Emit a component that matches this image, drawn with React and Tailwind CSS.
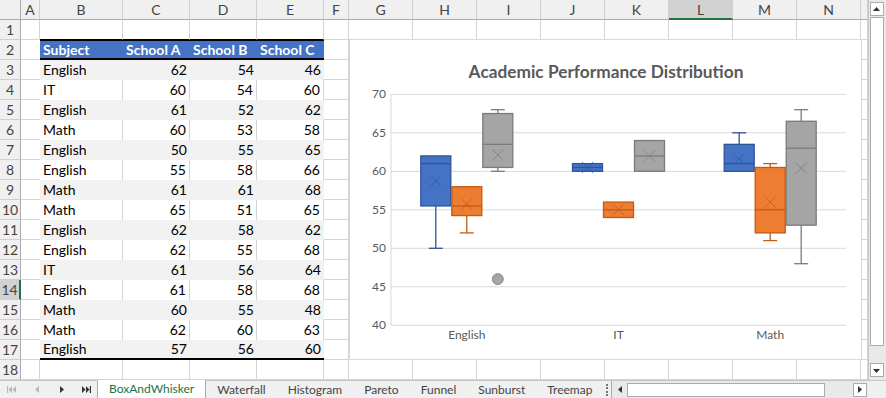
import React from 'react';

const COLS = [
  { k: 'A', w: 'w-[19px]' },
  { k: 'B', w: 'w-[83px]' },
  { k: 'C', w: 'w-[67px]' },
  { k: 'D', w: 'w-[67px]' },
  { k: 'E', w: 'w-[67px]' },
  { k: 'F', w: 'w-[25px]' },
  { k: 'G', w: 'w-[64px]' },
  { k: 'H', w: 'w-[64px]' },
  { k: 'I', w: 'w-[64px]' },
  { k: 'J', w: 'w-[64px]' },
  { k: 'K', w: 'w-[64px]' },
  { k: 'L', w: 'w-[64px]' },
  { k: 'M', w: 'w-[64px]' },
  { k: 'N', w: 'w-[64px]' },
  { k: '', w: 'w-[7px]' },
];

const DATA = [
  ['English', 62, 54, 46],
  ['IT', 60, 54, 60],
  ['English', 61, 52, 62],
  ['Math', 60, 53, 58],
  ['English', 50, 55, 65],
  ['English', 55, 58, 66],
  ['Math', 61, 61, 68],
  ['Math', 65, 51, 65],
  ['English', 62, 58, 62],
  ['English', 62, 55, 68],
  ['IT', 61, 56, 64],
  ['English', 61, 58, 68],
  ['Math', 60, 55, 48],
  ['Math', 62, 60, 63],
  ['English', 57, 56, 60],
];

const TABS = ['BoxAndWhisker', 'Waterfall', 'Histogram', 'Pareto', 'Funnel', 'Sunburst', 'Treemap'];

const SERIES = [
  { fill: '#4472C4', stroke: '#2F5597' },
  { fill: '#ED7D31', stroke: '#C55A11' },
  { fill: '#A5A5A5', stroke: '#7B7B7B' },
];

const GROUPS = [
  {
    label: 'English',
    cx: 116.8,
    boxes: [
      { min: 50, q1: 55.5, med: 61, q3: 62, max: 62, mean: 58.75 },
      { min: 52, q1: 54.25, med: 55.5, q3: 58, max: 58, mean: 55.75 },
      { min: 60, q1: 60.5, med: 63.5, q3: 67.5, max: 68, mean: 62.125, out: [46] },
    ],
  },
  {
    label: 'IT',
    cx: 268.5,
    boxes: [
      { min: 60, q1: 60, med: 60.5, q3: 61, max: 61, mean: 60.5 },
      { min: 54, q1: 54, med: 55, q3: 56, max: 56, mean: 55 },
      { min: 60, q1: 60, med: 62, q3: 64, max: 64, mean: 62 },
    ],
  },
  {
    label: 'Math',
    cx: 420.2,
    boxes: [
      { min: 60, q1: 60, med: 61, q3: 63.5, max: 65, mean: 61.6 },
      { min: 51, q1: 52, med: 55, q3: 60.5, max: 61, mean: 56 },
      { min: 48, q1: 53, med: 63, q3: 66.5, max: 68, mean: 60.4 },
    ],
  },
];

const Y = (v) => 54.3 + (70 - v) * 7.7;

function cellClass(r, c) {
  const inTable = c >= 1 && c <= 4;
  if (r === 1 && inTable) return 'border-r border-r-[#D4D4D4] border-b border-b-black';
  if (r === 2) {
    if (c === 0) return 'border-b border-[#D4D4D4]';
    if (inTable) return 'bg-[#4472C4] border-t border-b-2 border-black text-white font-bold';
  }
  if (r >= 3 && r <= 17) {
    if (c === 0) return 'border-b border-[#D4D4D4]';
    if (inTable) {
      if (r === 17) return 'bg-[#F2F2F2] border-b-2 border-black';
      if (r % 2 === 1) return 'bg-[#F2F2F2]';
      return 'bg-white border-r border-[#D4D4D4]';
    }
  }
  return 'border-r border-b border-[#D4D4D4]';
}

function cellText(r, c) {
  if (r === 2 && c >= 1 && c <= 4) return ['Subject', 'School A', 'School B', 'School C'][c - 1];
  if (r >= 3 && r <= 17 && c >= 1 && c <= 4) return DATA[r - 3][c - 1];
  return null;
}

function GridRow({ r }) {
  const active = r === 14;
  return (
    <div className="flex h-[20px]">
      <div
        className={`flex w-[21px] shrink-0 items-center justify-center border-b border-b-[#D0D0D0] text-[14px] text-[#444] ${
          active ? 'bg-[#D2D2D2] border-r-2 border-r-[#217346]' : 'bg-[#F0F0F0] border-r border-r-[#ABABAB]'
        }`}
      >
        {r}
      </div>
      {COLS.map((col, c) => {
        const t = cellText(r, c);
        return (
          <div
            key={c}
            className={`${col.w} shrink-0 flex items-center px-[3px] text-[14px] leading-none ${
              c === 1 || r === 2 ? 'justify-start' : 'justify-end'
            } ${cellClass(r, c)}`}
          >
            {t}
          </div>
        );
      })}
    </div>
  );
}

function BoxChart() {
  return (
    <svg width="511" height="319" className="block">
      <text x="256" y="38" textAnchor="middle" fontSize="17.3" fontWeight="700" fill="#595959" fontFamily="Lato, sans-serif">
        Academic Performance Distribution
      </text>
      {[70, 65, 60, 55, 50, 45, 40].map((v) => (
        <g key={v}>
          <line x1="41" x2="496" y1={Y(v)} y2={Y(v)} stroke="#D9D9D9" strokeWidth="1" />
          <text x="36" y={Y(v) + 4} textAnchor="end" fontSize="12" fill="#595959" fontFamily="Lato, sans-serif">
            {v}
          </text>
        </g>
      ))}
      <line x1="41" x2="41" y1={Y(70)} y2={Y(40)} stroke="#D9D9D9" strokeWidth="1" />
      {GROUPS.map((g) => (
        <g key={g.label}>
          <text x={g.cx} y="299" textAnchor="middle" fontSize="12" fill="#595959" fontFamily="Lato, sans-serif">
            {g.label}
          </text>
          {g.boxes.map((b, i) => {
            const s = SERIES[i];
            const left = g.cx - 46.5 + i * 31;
            const mid = left + 15.5;
            return (
              <g key={i}>
                {b.max > b.q3 && (
                  <>
                    <line x1={mid} x2={mid} y1={Y(b.max)} y2={Y(b.q3)} stroke={s.stroke} strokeWidth="1.3" />
                    <line x1={mid - 7} x2={mid + 7} y1={Y(b.max)} y2={Y(b.max)} stroke={s.stroke} strokeWidth="1.3" />
                  </>
                )}
                {b.min < b.q1 && (
                  <>
                    <line x1={mid} x2={mid} y1={Y(b.q1)} y2={Y(b.min)} stroke={s.stroke} strokeWidth="1.3" />
                    <line x1={mid - 7} x2={mid + 7} y1={Y(b.min)} y2={Y(b.min)} stroke={s.stroke} strokeWidth="1.3" />
                  </>
                )}
                <rect
                  x={left + 0.5}
                  y={Y(b.q3)}
                  width="30"
                  height={Y(b.q1) - Y(b.q3)}
                  fill={s.fill}
                  stroke={s.stroke}
                  strokeWidth="1.3"
                />
                <line x1={left + 0.5} x2={left + 30.5} y1={Y(b.med)} y2={Y(b.med)} stroke={s.stroke} strokeWidth="1.3" />
                <path
                  d={`M${mid - 5.5} ${Y(b.mean) - 5.5} L${mid + 5.5} ${Y(b.mean) + 5.5} M${mid + 5.5} ${Y(b.mean) - 5.5} L${mid - 5.5} ${Y(b.mean) + 5.5}`}
                  stroke={s.stroke}
                  strokeOpacity="0.75"
                  strokeWidth="1"
                />
                {(b.out || []).map((o) => (
                  <circle key={o} cx={mid} cy={Y(o)} r="5.5" fill={s.fill} stroke={s.stroke} strokeWidth="0.8" />
                ))}
              </g>
            );
          })}
        </g>
      ))}
    </svg>
  );
}

function Tri({ dir = 'right', color = '#333' }) {
  const d = {
    right: 'M2 0 L6 3.5 L2 7 Z',
    left: 'M6 0 L2 3.5 L6 7 Z',
    up: 'M0 5 L3.5 1 L7 5 Z',
    down: 'M0 2 L3.5 6 L7 2 Z',
  }[dir];
  return (
    <svg width="8" height="7" viewBox="0 0 8 7">
      <path d={d} fill={color} />
    </svg>
  );
}

function NavBar() {
  return (
    <div className="flex h-full w-[97px] shrink-0 items-center">
      <div className="flex w-[24px] justify-center">
        <svg width="10" height="7" viewBox="0 0 10 7">
          <rect x="0" y="0" width="1.2" height="7" fill="#B8B8B8" />
          <path d="M5 0 L1.5 3.5 L5 7 Z M9 0 L5.5 3.5 L9 7 Z" fill="#B8B8B8" />
        </svg>
      </div>
      <div className="flex w-[25px] justify-center">
        <Tri dir="left" color="#B8B8B8" />
      </div>
      <div className="flex w-[25px] justify-center">
        <Tri dir="right" color="#333" />
      </div>
      <div className="flex w-[23px] justify-center">
        <svg width="10" height="7" viewBox="0 0 10 7">
          <path d="M1 0 L4.5 3.5 L1 7 Z M5 0 L8.5 3.5 L5 7 Z" fill="#333" />
          <rect x="8.8" y="0" width="1.2" height="7" fill="#333" />
        </svg>
      </div>
    </div>
  );
}

export default function App() {
  return (
    <div className="relative h-[398px] w-[886px] overflow-hidden bg-white font-['Lato','Noto_Sans',sans-serif] text-black">
      <div className="flex h-[380px]">
        <div className="relative w-[868px] shrink-0">
          <div className="flex h-[20px]">
            <div className="w-[21px] shrink-0 border-r border-b border-[#ABABAB] bg-[#F0F0F0]" />
            {COLS.map((col) => (
              <div
                key={col.k || 'x'}
                className={`${col.w} shrink-0 flex items-center justify-center text-[14px] text-[#444] border-r border-r-[#D0D0D0] ${
                  col.k === 'L' ? 'bg-[#D2D2D2] border-b-2 border-b-[#217346]' : 'bg-[#F0F0F0] border-b border-b-[#ABABAB]'
                }`}
              >
                {col.k}
              </div>
            ))}
          </div>
          {Array.from({ length: 18 }, (_, i) => (
            <GridRow key={i} r={i + 1} />
          ))}

          <div className="absolute left-[349px] top-[39px] h-[321px] w-[513px] border border-[#D9D9D9] bg-white">
            <BoxChart />
          </div>
        </div>

        <div className="flex w-[18px] shrink-0 flex-col items-center border-l border-[#C6C6C6] bg-[#E9E9E9] pt-[2px] pr-[1px]">
          <div className="flex h-[14px] w-[14px] items-center justify-center border border-[#ABABAB] bg-white">
            <Tri dir="up" />
          </div>
          <div className="mt-[1px] h-[329px] w-[14px] border border-[#ABABAB] bg-white" />
          <div className="flex-1" />
          <div className="mb-[3px] flex h-[14px] w-[14px] items-center justify-center border border-[#ABABAB] bg-white">
            <Tri dir="down" />
          </div>
        </div>
      </div>

      <div className="flex h-[18px] items-center border-t border-[#C6C6C6] bg-[#F0F0F0] text-[12px] text-[#444]">
        <NavBar />
        <div className="flex h-full w-[506px] shrink-0 items-center border-l border-[#ABABAB]">
          {TABS.map((t, i) =>
            i === 0 ? (
              <div
                key={t}
                className="-mt-[1px] flex h-[19px] items-center border-r border-[#ABABAB] bg-white px-[11px] text-[#217346]"
              >
                {t}
              </div>
            ) : (
              <div key={t} className="flex h-full items-center px-[11px]">
                {t}
              </div>
            )
          )}
        </div>
        <div className="flex w-[8px] shrink-0 justify-center">
          <div className="h-[12px] border-l-2 border-dotted border-[#777]" />
        </div>
        <div className="flex h-full w-[257px] shrink-0 items-center border-l border-[#ABABAB] bg-[#E9E9E9] pl-[1px]">
          <div className="flex h-[14px] w-[14px] items-center justify-center">
            <Tri dir="left" />
          </div>
          <div className="h-[14px] w-[198px] border border-[#ABABAB] bg-white" />
          <div className="flex-1" />
          <div className="mr-[1px] flex h-[14px] w-[14px] items-center justify-center border border-[#ABABAB] bg-white">
            <Tri dir="right" />
          </div>
        </div>
        <div className="h-full flex-1 bg-[#F0F0F0]" />
      </div>
    </div>
  );
}
